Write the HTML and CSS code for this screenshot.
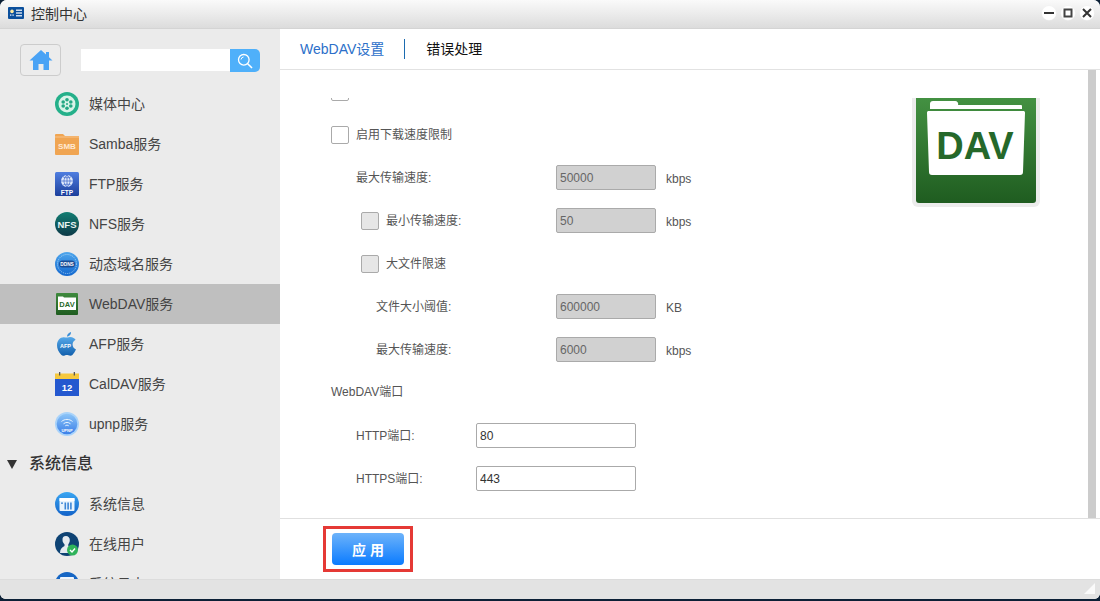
FILE: index.html
```html
<!DOCTYPE html>
<html lang="zh-CN">
<head>
<meta charset="utf-8">
<title>控制中心</title>
<link rel="stylesheet" href="styles.css">
</head>
<body>
<div class="window">
  <header class="titlebar">
    <svg class="app-icon" viewBox="0 0 16 12" width="16" height="12"><rect width="16" height="12" rx="1" fill="#0b4f9c"/><circle cx="4" cy="4.4" r="1.8" fill="#ffe9a0"/><rect x="2" y="7.4" width="1.4" height="1.4" fill="#cfe3fa"/><rect x="4.4" y="7.4" width="1.4" height="1.4" fill="#cfe3fa"/><rect x="8" y="2.6" width="6" height="1.2" fill="#fff"/><rect x="8" y="5.4" width="6" height="1.2" fill="#fff"/><rect x="8" y="8.2" width="6" height="1.2" fill="#fff"/></svg>
    <span class="title">控制中心</span>
    <div class="controls">
      <span class="ctl"><svg viewBox="0 0 14 14" width="14" height="14"><path d="M2 7h10" stroke="#333" stroke-width="2"/></svg></span>
      <span class="ctl"><svg viewBox="0 0 14 14" width="14" height="14"><rect x="3.5" y="3.5" width="7" height="7" fill="none" stroke="#444" stroke-width="2"/></svg></span>
      <span class="ctl"><svg viewBox="0 0 14 14" width="14" height="14"><path d="M3 3l8 8M11 3l-8 8" stroke="#333" stroke-width="2"/></svg></span>
    </div>
  </header>

  <div class="middle">
    <aside class="sidebar">
      <div class="side-top">
        <button class="home" type="button">
          <svg viewBox="0 0 24 22" width="24" height="22"><path d="M12 1L0.5 11.5h3.5V21h5.5v-6h5v6H20v-9.500h3.500L20 8.300V3h-3v2.500z" fill="#4aa3f5"/></svg>
        </button>
        <div class="search">
          <input class="search-input" type="text">
          <span class="search-btn"><svg viewBox="0 0 16 16" width="16" height="16"><circle cx="6.800" cy="6.800" r="5.300" fill="none" stroke="#fff" stroke-width="1.300"/><path d="M10.700 10.700L15 15" stroke="#fff" stroke-width="1.600"/><path d="M4 6.500a3 3 0 0 1 2.500-2.500" fill="none" stroke="#fff" stroke-width="1"/></svg></span>
        </div>
      </div>
      <ul class="nav">
        <li class="nav-item">
          <svg class="nav-icon" viewBox="0 0 24 24"><circle cx="12" cy="12" r="12" fill="#24b08a"/><circle cx="12" cy="12" r="8.500" fill="#d8f3e8"/><g fill="#24a884"><circle cx="12" cy="7.800" r="1.800"/><circle cx="12" cy="16.200" r="1.800"/><circle cx="8.200" cy="10" r="1.800"/><circle cx="15.800" cy="10" r="1.800"/><circle cx="8.200" cy="14" r="1.800"/><circle cx="15.800" cy="14" r="1.800"/><circle cx="12" cy="12" r="1"/></g></svg>
          <span class="nav-text">媒体中心</span>
        </li>
        <li class="nav-item">
          <svg class="nav-icon" viewBox="0 0 24 24"><path d="M0 3a1 1 0 0 1 1-1h7l2 2h14v18a1 1 0 0 1-1 1H1a1 1 0 0 1-1-1z" fill="#f0a552"/><rect y="4.500" width="24" height="1" fill="#f7c48a"/><text class="ic-t" x="12" y="16.500" font-size="8" fill="#ffe9d2">SMB</text></svg>
          <span class="nav-text">Samba服务</span>
        </li>
        <li class="nav-item">
          <svg class="nav-icon" viewBox="0 0 24 24"><defs><linearGradient id="gf" x1="0" y1="0" x2="0" y2="1"><stop offset="0" stop-color="#4f7ee0"/><stop offset="1" stop-color="#1c3f9c"/></linearGradient></defs><rect width="24" height="24" rx="1.500" fill="url(#gf)"/><circle cx="12" cy="9" r="6" fill="#dfe9fb"/><path d="M6 9h12M12 3v12M8 4.800c2.500 1.400 5.500 1.400 8 0M8 13.200c2.500-1.400 5.500-1.400 8 0M12 3c-4 3-4 9 0 12M12 3c4 3 4 9 0 12" fill="none" stroke="#3d66c8" stroke-width=".7"/><text class="ic-t" x="12" y="22.500" font-size="6.500" fill="#fff">FTP</text></svg>
          <span class="nav-text">FTP服务</span>
        </li>
        <li class="nav-item">
          <svg class="nav-icon" viewBox="0 0 24 24"><defs><linearGradient id="gn" x1="0" y1="0" x2="0" y2="1"><stop offset="0" stop-color="#127d72"/><stop offset="1" stop-color="#0d3a48"/></linearGradient></defs><circle cx="12" cy="12" r="12" fill="url(#gn)"/><text class="ic-t" x="12" y="15.500" font-size="9.500" fill="#e8f4f2">NFS</text></svg>
          <span class="nav-text">NFS服务</span>
        </li>
        <li class="nav-item">
          <svg class="nav-icon" viewBox="0 0 24 24"><defs><linearGradient id="gd" x1="0" y1="0" x2="0" y2="1"><stop offset="0" stop-color="#4fa6ec"/><stop offset="1" stop-color="#1368cf"/></linearGradient></defs><circle cx="12" cy="12" r="12" fill="url(#gd)"/><circle cx="12" cy="12" r="9.500" fill="none" stroke="#bfe0fa" stroke-width=".8" stroke-dasharray="1 1"/><rect x="4" y="8.500" width="16" height="7" rx="3.500" fill="#1b4d96"/><text class="ic-t" x="12" y="14" font-size="4.800" fill="#fff">DDNS</text></svg>
          <span class="nav-text">动态域名服务</span>
        </li>
        <li class="nav-item is-active">
          <svg class="nav-icon" viewBox="0 0 24 24"><defs><linearGradient id="gw" x1="0" y1="0" x2="0" y2="1"><stop offset="0" stop-color="#3f8a3e"/><stop offset="1" stop-color="#1f5c20"/></linearGradient></defs><rect x="1" y="1" width="22" height="22" rx="1" fill="url(#gw)"/><path d="M3 4.500h5l1 1h12v12.500H3z" fill="#fff"/><text class="ic-t" x="12" y="15" font-size="7.500" fill="#2a6b2c">DAV</text></svg>
          <span class="nav-text">WebDAV服务</span>
        </li>
        <li class="nav-item">
          <svg class="nav-icon" viewBox="0 0 24 24"><defs><linearGradient id="ga" x1="0" y1="0" x2="0" y2="1"><stop offset="0" stop-color="#55a9ea"/><stop offset="1" stop-color="#1260ad"/></linearGradient></defs><path d="M12.500 5.500C14.500 4.500 17 4.800 19 6.200c.8.500 1.300 1 1.600 1.600-2 1-3 2.700-3 4.700 0 2.300 1.200 4 3.400 5-.8 2-2 3.800-3.600 5.400-1 1-2.500 1-4 .3-1-.4-2.100-.4-3.200 0-1.700.8-3 .7-4-.5C3.500 19.900 2 16.500 2 13.200 2 8.500 5 5.200 8.700 5.200c1.400 0 2.600.5 3.800.3z" fill="url(#ga)"/><path d="M12 4.500c0-2 1.700-4 4-4.500 .2 2.300-1.700 4.500-4 4.500z" fill="#3c8fd8"/><text class="ic-t" x="10.500" y="16" font-size="5.500" fill="#fff">AFP</text></svg>
          <span class="nav-text">AFP服务</span>
        </li>
        <li class="nav-item">
          <svg class="nav-icon" viewBox="0 0 24 24"><rect y="1.500" width="24" height="6" fill="#f5c83e"/><rect y="7" width="24" height="17" fill="#2458cf"/><rect x="4" y="0" width="1.300" height="3.500" fill="#555"/><rect x="18.700" y="0" width="1.300" height="3.500" fill="#555"/><text class="ic-t" x="12" y="19" font-size="9.500" fill="#fff">12</text></svg>
          <span class="nav-text">CalDAV服务</span>
        </li>
        <li class="nav-item">
          <svg class="nav-icon" viewBox="0 0 24 24"><defs><linearGradient id="gu" x1="0" y1="0" x2="0" y2="1"><stop offset="0" stop-color="#8cc5f8"/><stop offset="1" stop-color="#3a7fe8"/></linearGradient></defs><circle cx="12" cy="12" r="12" fill="#a9d3fa"/><circle cx="12" cy="12" r="10.300" fill="url(#gu)"/><path d="M6.500 9.500c3.200-2.800 7.800-2.800 11 0M8.500 11.800c2.100-1.800 4.900-1.800 7 0M10.300 13.800c1-.8 2.400-.8 3.400 0" fill="none" stroke="#e8f4ff" stroke-width="1"/><text class="ic-t" x="12" y="20" font-size="4" fill="#fff">UPNP</text></svg>
          <span class="nav-text">upnp服务</span>
        </li>
        <li class="nav-group">
          <span class="caret"></span>
          <span class="group-text">系统信息</span>
        </li>
        <li class="nav-item">
          <svg class="nav-icon" viewBox="0 0 24 24"><defs><linearGradient id="gs" x1="0" y1="0" x2="0" y2="1"><stop offset="0" stop-color="#3aa6f2"/><stop offset="1" stop-color="#1262c8"/></linearGradient></defs><circle cx="12" cy="12" r="12" fill="url(#gs)"/><rect x="4.500" y="6" width="15" height="13" rx="1" fill="#e8f4fd"/><rect x="4.500" y="6" width="15" height="3" fill="#fff"/><g fill="#3b86d6"><rect x="6" y="10.500" width="2" height="1.300"/><rect x="9.500" y="10.500" width="1.600" height="7"/><rect x="12.300" y="10.500" width="1.600" height="7"/><rect x="15.100" y="10.500" width="1.600" height="7"/></g></svg>
          <span class="nav-text">系统信息</span>
        </li>
        <li class="nav-item">
          <svg class="nav-icon" viewBox="0 0 24 24"><circle cx="12" cy="12" r="12" fill="#0e4374"/><path d="M11 4a3.800 3.800 0 0 1 3.800 4c0 2-.8 3.400-1.500 4.300v1.700l1.700 1.500-2 5.500H5c0-3.500 1.500-5.500 4.500-6.900v-1.800C8.600 11.400 7.500 10 7.500 8A3.700 3.700 0 0 1 11 4z" fill="#e4eaf0"/><circle cx="17.500" cy="18" r="5.500" fill="#2fb35a"/><path d="M15 18l2 2 3-3.500" fill="none" stroke="#fff" stroke-width="1.400"/></svg>
          <span class="nav-text">在线用户</span>
        </li>
        <li class="nav-item">
          <svg class="nav-icon" viewBox="0 0 24 24"><circle cx="12" cy="12" r="12" fill="#1666c4"/><rect x="5" y="5" width="14" height="14" rx="1" fill="#eef5fc"/></svg>
          <span class="nav-text">系统日志</span>
        </li>
      </ul>
    </aside>

    <main class="main">
      <nav class="tabs">
        <span class="tab tab-active">WebDAV设置</span>
        <span class="tab-sep"></span>
        <span class="tab">错误处理</span>
      </nav>

      <div class="body">
        <div class="pane">
          <div class="clip">
            <svg class="dav-logo" viewBox="0 0 128 128" width="128" height="128"><defs><linearGradient id="gl" x1="0" y1="0" x2="0" y2="1"><stop offset="0" stop-color="#4a9a48"/><stop offset="1" stop-color="#1f5c20"/></linearGradient></defs><rect width="128" height="128" rx="6" fill="#ececec"/><rect x="4" y="0" width="120" height="124" rx="3" fill="url(#gl)"/><path d="M18 27v-2a3 3 0 0 1 3-3h22a3 3 0 0 1 3 4h63a1 1 0 0 1 1 1v3H18z" fill="#fff"/><path d="M16 32h96a2 2 0 0 1 1 2l-2 59a3 3 0 0 1-3 3H20a3 3 0 0 1-3-3l-2-59a2 2 0 0 1 1-2z" fill="#fff"/><text class="logo-text" x="63" y="80">DAV</text></svg>
            <div class="form">
              <div class="row row-l1"><span class="cb"></span></div>
              <div class="row row-l1"><span class="cb"></span><span class="lbl">启用下载速度限制</span></div>
              <div class="row row-l2"><span class="lbl w-200">最大传输速度:</span><input class="field is-off" value="50000" readonly><span class="unit">kbps</span></div>
              <div class="row row-l3"><span class="cb is-off"></span><span class="lbl w-170">最小传输速度:</span><input class="field is-off" value="50" readonly><span class="unit">kbps</span></div>
              <div class="row row-l3"><span class="cb is-off"></span><span class="lbl">大文件限速</span></div>
              <div class="row row-l4"><span class="lbl w-180">文件大小阈值:</span><input class="field is-off" value="600000" readonly><span class="unit">KB</span></div>
              <div class="row row-l4"><span class="lbl w-180">最大传输速度:</span><input class="field is-off" value="6000" readonly><span class="unit">kbps</span></div>
              <div class="row row-l1"><span class="lbl plain">WebDAV端口</span></div>
              <div class="row row-l2"><span class="lbl w-120">HTTP端口:</span><input class="field wide" value="80"></div>
              <div class="row row-l2"><span class="lbl w-120">HTTPS端口:</span><input class="field wide" value="443"></div>
            </div>
          </div>
        </div>
        <div class="thumb"></div>
      </div>

      <footer class="actions">
        <div class="mark"><button class="apply" type="button">应 用</button></div>
      </footer>
    </main>
  </div>

  <footer class="statusbar">
    <span class="grip"></span>
  </footer>
</div>
</body>
</html>
```

FILE: styles.css
```css
* { box-sizing: border-box; }
html, body { margin: 0; height: 100%; }
body {
  background: #0c2036;
  font-family: "Liberation Sans", "Noto Sans CJK SC", sans-serif;
  overflow: hidden;
}
.window {
  width: 1100px;
  height: 599px;
  border-radius: 7px 7px 6px 6px;
  overflow: hidden;
  display: flex;
  flex-direction: column;
  background: #fff;
}
.titlebar {
  height: 29px;
  flex: none;
  display: flex;
  align-items: center;
  padding: 0 6px 2px 8px;
  background: linear-gradient(#fafafa, #dcdcdc);
  border-bottom: 1px solid #d4d4d4;
}
.app-icon { flex: none; }
.title { margin-left: 7px; font-size: 14px; color: #333; }
.controls { margin-left: auto; display: flex; gap: 5px; }
.ctl {
  width: 14px;
  height: 14px;
  border-radius: 50%;
  background: #fff;
  display: flex;
  box-shadow: 0 0 0 0.5px #f2f2f2;
}
.middle { flex: 1; display: flex; min-height: 0; }
.sidebar {
  width: 280px;
  flex: none;
  background: #ebebeb;
  overflow: hidden;
}
.side-top {
  display: flex;
  align-items: center;
  height: 55px;
  padding: 7px 0 0 20px;
}
.home {
  width: 41px;
  height: 32px;
  padding: 0;
  border: 1px solid #ccc;
  border-radius: 4px;
  background: #ececec;
  display: flex;
  align-items: center;
  justify-content: center;
}
.search { display: flex; margin-left: 20px; height: 22px; }
.search-input {
  width: 149px;
  height: 22px;
  border: 0;
  padding: 0;
  background: #fff;
}
.search-btn {
  width: 30px;
  height: 23px;
  background: #4fb0fa;
  border-radius: 0 5px 5px 0;
  display: flex;
  align-items: center;
  justify-content: center;
}
.nav { list-style: none; margin: 0; padding: 0; }
.nav-item {
  height: 40px;
  display: flex;
  align-items: center;
  padding-left: 55px;
  font-size: 14px;
  color: #444;
}
.nav-item.is-active { background: #bfbfbf; }
.nav-text { padding-bottom: 2px; }
.nav-icon { width: 24px; height: 24px; flex: none; margin-right: 10px; }
.ic-t {
  font-family: "Liberation Sans", sans-serif;
  font-weight: 700;
  text-anchor: middle;
}
.nav-group {
  height: 40px;
  display: flex;
  align-items: center;
  padding-left: 7px;
  font-size: 16px;
  font-weight: 500;
  color: #333;
}
.group-text { padding-bottom: 4px; }
.caret {
  width: 0;
  height: 0;
  border-left: 5px solid transparent;
  border-right: 5px solid transparent;
  border-top: 9px solid #333;
  margin-right: 12px;
}
.main { flex: 1; min-width: 0; display: flex; flex-direction: column; }
.tabs {
  height: 41px;
  flex: none;
  display: flex;
  align-items: center;
  padding: 0 0 0 20px;
  border-bottom: 1px solid #e2e2e2;
  font-size: 14px;
  color: #111;
}
.tab { padding-bottom: 3px; }
.tab-active { color: #2c6fc9; }
.tab-sep {
  width: 1px;
  height: 20px;
  background: #1b6bb0;
  margin: 0 21px 0 20px;
}
.body { height: 448px; flex: none; display: flex; }
.pane { flex: 1; padding-top: 28px; min-width: 0; }
.clip { position: relative; height: 420px; overflow: hidden; }
.dav-logo { position: absolute; left: 632px; top: -19px; }
.thumb { width: 8px; background: #cccccc; margin-right: 4px; flex: none; }
.form { margin-top: -28px; }
.row {
  height: 43px;
  display: flex;
  align-items: center;
  font-size: 12px;
  color: #555;
}
.row-l1 { padding-left: 51px; }
.row-l2 { padding-left: 76px; }
.row-l3 { padding-left: 81px; }
.row-l4 { padding-left: 96px; }
.cb {
  width: 18px;
  height: 18px;
  flex: none;
  border: 1px solid #aaa;
  border-radius: 2px;
  background: #fff;
  margin-right: 7px;
}
.cb.is-off { background: #e6e6e6; }
.lbl { flex: none; padding-bottom: 2px; }
.plain { color: #555; padding-bottom: 4px; }
.w-200 { width: 200px; }
.w-180 { width: 180px; }
.w-170 { width: 170px; }
.w-120 { width: 120px; }
.field {
  width: 100px;
  height: 25px;
  flex: none;
  border: 1px solid #aaa;
  border-radius: 2px;
  padding: 0 3px;
  font: 12px "Liberation Sans", sans-serif;
  color: #333;
  background: #fff;
  outline: none;
}
.field.is-off { background: #d1d1d1; color: #666; }
.field.wide { width: 160px; }
.unit { margin-left: 10px; padding-top: 2px; color: #555; }
.actions {
  flex: 1;
  display: flex;
  align-items: center;
  padding-left: 43px;
  border-top: 1px solid #e0e0e0;
}
.mark {
  border: 3px solid #e53935;
  padding: 4px 6px;
  display: flex;
}
.apply {
  width: 72px;
  height: 32px;
  border: 0;
  border-radius: 4px;
  background: linear-gradient(#6db3fa, #0a7bff);
  color: #fff;
  font: 700 14px "Liberation Sans", "Noto Sans CJK SC", sans-serif;
  padding: 0;
}
.statusbar {
  height: 20px;
  flex: none;
  background: #e3e3e3;
  border-top: 1px solid #dcdcdc;
  position: relative;
}
.grip {
  position: absolute;
  right: 5px;
  bottom: 5px;
  width: 0;
  height: 0;
  border-left: 11px solid transparent;
  border-bottom: 11px solid #fafafa;
}
.logo-text {
  font-family: "Liberation Sans", sans-serif;
  font-weight: 700;
  font-size: 38px;
  fill: #25682a;
  text-anchor: middle;
}
```
